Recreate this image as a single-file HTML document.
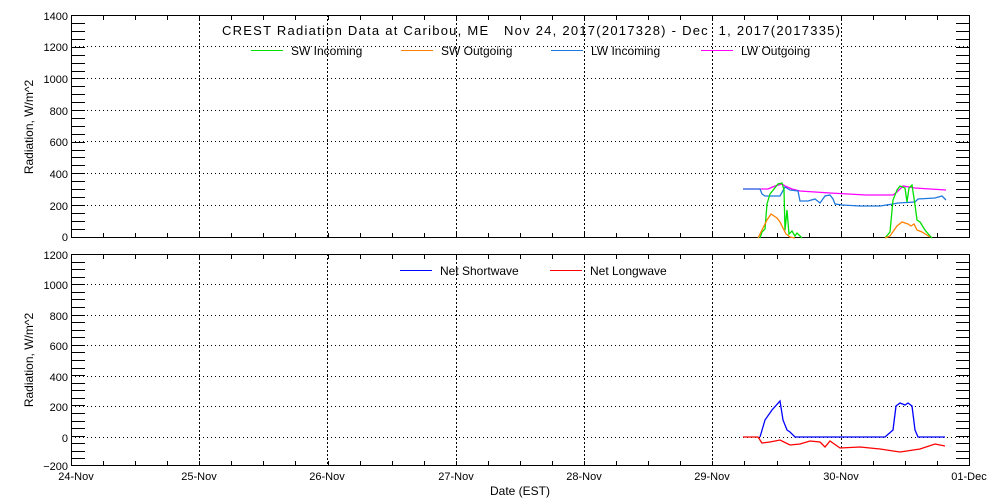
<!DOCTYPE html>
<html><head><style>
html,body{margin:0;padding:0;background:#fff;}
svg{display:block;font-family:"Liberation Sans",sans-serif;font-size:12px;}
</style></head><body>
<svg width="1000" height="500" viewBox="0 0 1000 500" shape-rendering="crispEdges">
<rect width="1000" height="500" fill="#fff"/>
<g id="p1">
<rect x="71.5" y="15.5" width="898" height="222" fill="none" stroke="#000"/>
<g stroke="#000" stroke-dasharray="1,3">
<line x1="71" x2="970" y1="46.5" y2="46.5"/><line x1="71" x2="970" y1="78.5" y2="78.5"/>
<line x1="71" x2="970" y1="110.5" y2="110.5"/><line x1="71" x2="970" y1="141.5" y2="141.5"/>
<line x1="71" x2="970" y1="173.5" y2="173.5"/><line x1="71" x2="970" y1="205.5" y2="205.5"/>
</g>
<g stroke="#000" stroke-dasharray="2,2">
<line x1="199.5" x2="199.5" y1="15" y2="238"/><line x1="327.5" x2="327.5" y1="15" y2="238"/>
<line x1="456.5" x2="456.5" y1="15" y2="238"/><line x1="584.5" x2="584.5" y1="15" y2="238"/>
<line x1="712.5" x2="712.5" y1="15" y2="238"/><line x1="841.5" x2="841.5" y1="15" y2="238"/>
</g>
<g font-size="11" text-anchor="end">
<text x="68" y="20">1400</text><text x="68" y="51">1200</text><text x="68" y="83">1000</text>
<text x="68" y="115">800</text><text x="68" y="146">600</text><text x="68" y="178">400</text>
<text x="68" y="210">200</text><text x="68" y="241">0</text>
</g>
<text transform="translate(33,127) rotate(-90)" text-anchor="middle">Radiation, W/m^2</text>
<text x="222" y="35" font-size="13" xml:space="preserve" style="white-space:pre" textLength="618" lengthAdjust="spacing">CREST Radiation Data at Caribou, ME   Nov 24, 2017(2017328) - Dec  1, 2017(2017335)</text>
<line x1="251" x2="283" y1="50.5" y2="50.5" stroke="#00e000"/><text x="291" y="55">SW Incoming</text>
<line x1="401" x2="433" y1="50.5" y2="50.5" stroke="#ff8000"/><text x="441" y="55">SW Outgoing</text>
<line x1="551" x2="583" y1="50.5" y2="50.5" stroke="#1e78e0"/><text x="591" y="55">LW Incoming</text>
<line x1="701" x2="733" y1="50.5" y2="50.5" stroke="#ff00ff"/><text x="741" y="55">LW Outgoing</text>
<g fill="none" stroke-width="1.3" shape-rendering="auto">
<polyline stroke="#ff00ff" points="743,189 768,189 775,186 782,184 785,186 792,189 800,191 830,193 866,195 893,195 897,192 903,186 915,188 930,189 946,190"/>
<polyline stroke="#1e78e0" points="743,189 760,189 762,194 765,196 780,196 785,187 790,190 798,191 800,201 808,201 815,199 820,203 825,196 830,195 833,199 835,204 842,205 860,206 880,206 893,204 898,203 915,202 918,199 935,198 942,196 946,200"/>
<polyline stroke="#00e000" points="760,238 762,232 765,229 767,204 770,194 778,184 782,183 784,190 785,230 787,210 789,234 792,231 795,236 797,233 800,236 802,238"/>
<polyline stroke="#00e000" points="885,238 890,232 893,200 897,190 900,186 905,188 907,202 909,188 912,185 915,205 917,220 920,222 925,230 930,236 932,238"/>
<polyline stroke="#ff8000" points="758,238 767,220 771,214 777,218 780,222 783,228 786,234 790,237 795,238"/>
<polyline stroke="#ff8000" points="885,238 890,236 897,226 902,222 908,224 911,226 914,224 917,230 922,232 930,237"/>
</g>
</g>
<g id="p2">
<rect x="71.5" y="254.5" width="898" height="211" fill="none" stroke="#000"/>
<g stroke="#000" stroke-dasharray="1,3">
<line x1="71" x2="970" y1="284.5" y2="284.5"/><line x1="71" x2="970" y1="315.5" y2="315.5"/>
<line x1="71" x2="970" y1="345.5" y2="345.5"/><line x1="71" x2="970" y1="376.5" y2="376.5"/>
<line x1="71" x2="970" y1="406.5" y2="406.5"/><line x1="71" x2="970" y1="437.5" y2="437.5"/>
</g>
<g stroke="#000" stroke-dasharray="2,2">
<line x1="199.5" x2="199.5" y1="254" y2="466"/><line x1="327.5" x2="327.5" y1="254" y2="466"/>
<line x1="456.5" x2="456.5" y1="254" y2="466"/><line x1="584.5" x2="584.5" y1="254" y2="466"/>
<line x1="712.5" x2="712.5" y1="254" y2="466"/><line x1="841.5" x2="841.5" y1="254" y2="466"/>
</g>
<g font-size="11" text-anchor="end">
<text x="68" y="259">1200</text><text x="68" y="289">1000</text><text x="68" y="320">800</text>
<text x="68" y="350">600</text><text x="68" y="381">400</text><text x="68" y="411">200</text>
<text x="68" y="442">0</text><text x="68" y="470">−200</text>
</g>
<text transform="translate(33,360) rotate(-90)" text-anchor="middle">Radiation, W/m^2</text>
<line x1="400" x2="432" y1="270.5" y2="270.5" stroke="#0000ff"/><text x="440" y="275">Net Shortwave</text>
<line x1="550" x2="582" y1="270.5" y2="270.5" stroke="#ff0000"/><text x="590" y="275">Net Longwave</text>
<g fill="none" stroke-width="1.3" shape-rendering="auto">
<polyline stroke="#ff0000" points="743,437 758,437 762,443 770,442 780,440 790,445 800,444 810,441 820,442 825,447 830,441 840,448 860,447 880,449 900,452 920,449 935,444 945,446"/>
<polyline stroke="#0000ff" points="760,437 765,420 772,410 780,401 783,420 787,430 790,432 795,437 885,437 893,430 896,406 900,403 905,405 908,403 912,406 915,430 918,437 945,437"/>
</g>
<g font-size="11" text-anchor="middle">
<text x="76" y="480">24-Nov</text><text x="199" y="480">25-Nov</text><text x="327" y="480">26-Nov</text>
<text x="456" y="480">27-Nov</text><text x="584" y="480">28-Nov</text><text x="712" y="480">29-Nov</text>
<text x="841" y="480">30-Nov</text><text x="969" y="480">01-Dec</text>
</g>
<text x="520" y="495" text-anchor="middle">Date (EST)</text>
</g>
<g stroke="#000" fill="none">
<path d="M71 15.5h14M71 23.5h14M71 31.5h14M71 39.5h14M71 47.5h14M71 55.5h14M71 63.5h14M71 71.5h14M71 78.5h14M71 86.5h14M71 94.5h14M71 102.5h14M71 110.5h14M71 118.5h14M71 126.5h14M71 134.5h14M71 142.5h14M71 150.5h14M71 157.5h14M71 165.5h14M71 173.5h14M71 181.5h14M71 189.5h14M71 197.5h14M71 205.5h14M71 213.5h14M71 221.5h14M71 229.5h14M71 237.5h14"/>
<path transform="translate(885,0)" d="M71 15.5h14M71 23.5h14M71 31.5h14M71 39.5h14M71 47.5h14M71 55.5h14M71 63.5h14M71 71.5h14M71 78.5h14M71 86.5h14M71 94.5h14M71 102.5h14M71 110.5h14M71 118.5h14M71 126.5h14M71 134.5h14M71 142.5h14M71 150.5h14M71 157.5h14M71 165.5h14M71 173.5h14M71 181.5h14M71 189.5h14M71 197.5h14M71 205.5h14M71 213.5h14M71 221.5h14M71 229.5h14M71 237.5h14"/>
<path d="M71 254.5h14M71 262.5h14M71 269.5h14M71 277.5h14M71 284.5h14M71 292.5h14M71 299.5h14M71 307.5h14M71 315.5h14M71 322.5h14M71 330.5h14M71 337.5h14M71 345.5h14M71 352.5h14M71 360.5h14M71 368.5h14M71 375.5h14M71 383.5h14M71 390.5h14M71 398.5h14M71 405.5h14M71 413.5h14M71 421.5h14M71 428.5h14M71 436.5h14M71 443.5h14M71 451.5h14M71 458.5h14M71 465.5h14"/>
<path transform="translate(885,0)" d="M71 254.5h14M71 262.5h14M71 269.5h14M71 277.5h14M71 284.5h14M71 292.5h14M71 299.5h14M71 307.5h14M71 315.5h14M71 322.5h14M71 330.5h14M71 337.5h14M71 345.5h14M71 352.5h14M71 360.5h14M71 368.5h14M71 375.5h14M71 383.5h14M71 390.5h14M71 398.5h14M71 405.5h14M71 413.5h14M71 421.5h14M71 428.5h14M71 436.5h14M71 443.5h14M71 451.5h14M71 458.5h14M71 465.5h14"/>
<path id="xt" d="M71.5 0v5M103.5 0v5M135.5 0v5M167.5 0v5M199.5 0v5M231.5 0v5M263.5 0v5M295.5 0v5M328.5 0v5M360.5 0v5M392.5 0v5M424.5 0v5M456.5 0v5M488.5 0v5M520.5 0v5M552.5 0v5M584.5 0v5M616.5 0v5M648.5 0v5M680.5 0v5M712.5 0v5M744.5 0v5M777.5 0v5M809.5 0v5M841.5 0v5M873.5 0v5M905.5 0v5M937.5 0v5M969.5 0v5" transform="translate(0,15)"/>
<use href="#xt" transform="translate(0,218)"/>
<use href="#xt" transform="translate(0,239)"/>
<use href="#xt" transform="translate(0,446)"/>
</g>
</svg>
</body></html>
